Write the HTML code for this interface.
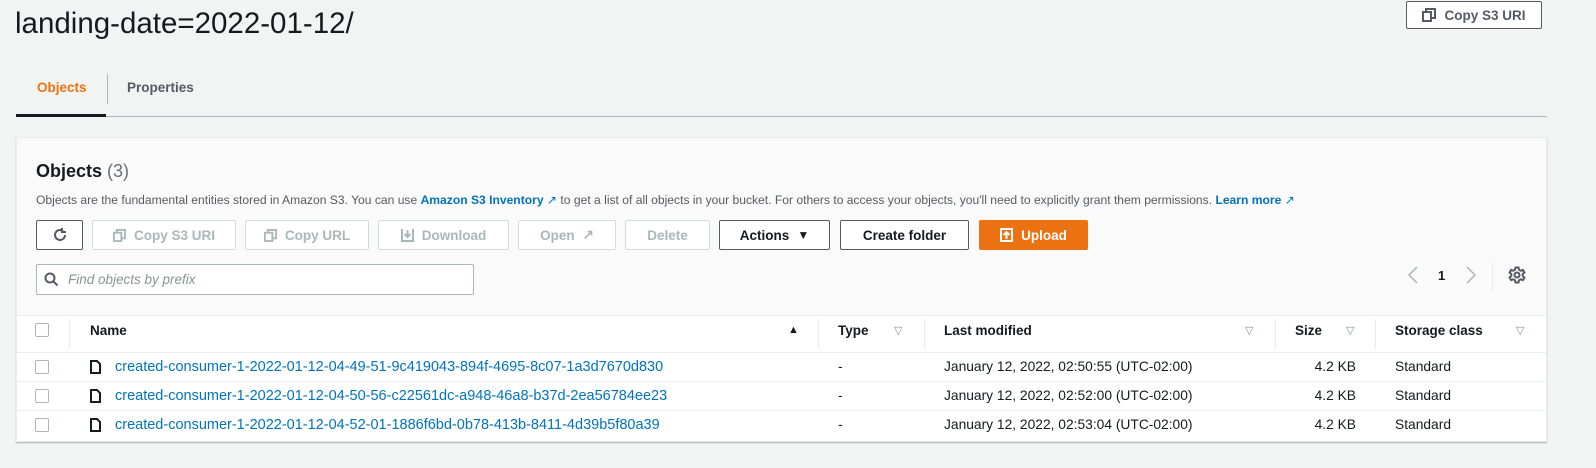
<!DOCTYPE html>
<html><head><meta charset="utf-8"><style>
*{box-sizing:border-box;margin:0;padding:0}
body{width:1596px;height:468px;background:#f2f3f3;font-family:"Liberation Sans",sans-serif;color:#16191f;position:relative;overflow:hidden}
.a{position:absolute;white-space:nowrap}
.btn{position:absolute;height:30px;border:1px solid #545b64;border-radius:2px;background:#fff;font-weight:bold;font-size:13.5px;color:#545b64;display:flex;align-items:center;justify-content:center;gap:8px}
.dis{border-color:#d5dbdb;color:#aab7b8}
.hd{font-weight:bold;font-size:13.5px;color:#16191f}
.div{position:absolute;width:1px;background:#eaeded}
.cb{position:absolute;width:14px;height:14px;border:1px solid #aab7b8;border-radius:2px;background:#fff}
.lnk{color:#0073bb;font-size:14.5px}
.cell{font-size:13.8px;color:#16191f}
.fil{position:absolute;color:#879596;font-size:11px}
</style></head><body>
<div class="a" style="left:15px;top:7px;font-size:29.5px;color:#16191f">landing-date=2022-01-12/</div>
<div class="btn" style="left:1406px;top:1px;width:136px;height:28px;color:#545b64"><svg width="14" height="14" viewBox="0 0 14 14" fill="none" stroke="#545b64" stroke-width="2"><rect x="1" y="4" width="8" height="9"/><path d="M4 4V1h9v9h-4"/></svg>Copy S3 URI</div>

<div class="a" style="left:37px;top:80px;font-size:13.5px;font-weight:bold;color:#ec7211">Objects</div>
<div class="a" style="left:107px;top:74px;width:1px;height:30px;background:#aab7b8"></div>
<div class="a" style="left:127px;top:80px;font-size:13.5px;font-weight:bold;color:#545b64">Properties</div>
<div class="a" style="left:16px;top:116px;width:1531px;height:1px;background:#aab7b8"></div>
<div class="a" style="left:16px;top:114px;width:90px;height:3px;background:#16191f"></div>

<div class="a" style="left:16px;top:137px;width:1531px;height:305px;background:#fafafa;border:1px solid #eaeded;box-shadow:0 1px 1px rgba(0,28,36,.3)"></div>
<div class="a" style="left:36px;top:161px;font-size:18px;font-weight:bold">Objects <span style="font-weight:normal;color:#687078">(3)</span></div>
<div class="a" style="left:36px;top:193px;font-size:12.1px;color:#545b64">Objects are the fundamental entities stored in Amazon S3. You can use <b style="color:#0073bb">Amazon S3 Inventory</b> <span style="color:#0073bb">&#x2197;&#xFE0E;</span> to get a list of all objects in your bucket. For others to access your objects, you'll need to explicitly grant them permissions. <b style="color:#0073bb">Learn more</b> <span style="color:#0073bb">&#x2197;&#xFE0E;</span></div>

<div class="btn" style="left:36px;top:220px;width:47px"><svg width="16" height="16" viewBox="0 0 16 16" fill="none" stroke="#545b64" stroke-width="2"><path d="M13 8a5 5 0 1 1-2-4"/><path d="M10 1v4h4" /></svg></div>
<div class="btn dis" style="left:92px;top:220px;width:144px"><svg width="13" height="13" viewBox="0 0 14 14" fill="none" stroke="#aab7b8" stroke-width="2"><rect x="1" y="4" width="8" height="9"/><path d="M4 4V1h9v9h-4"/></svg>Copy S3 URI</div>
<div class="btn dis" style="left:245px;top:220px;width:124px"><svg width="13" height="13" viewBox="0 0 14 14" fill="none" stroke="#aab7b8" stroke-width="2"><rect x="1" y="4" width="8" height="9"/><path d="M4 4V1h9v9h-4"/></svg>Copy URL</div>
<div class="btn dis" style="left:378px;top:220px;width:131px"><svg width="13" height="14" viewBox="0 0 13 14" fill="none" stroke="#aab7b8" stroke-width="2"><path d="M1 1v12h11V1M6.5 2v7M3.5 6l3 3 3-3"/></svg>Download</div>
<div class="btn dis" style="left:518px;top:220px;width:98px">Open <span>&#x2197;&#xFE0E;</span></div>
<div class="btn dis" style="left:625px;top:220px;width:85px">Delete</div>
<div class="btn" style="left:719px;top:220px;width:111px;color:#16191f">Actions <span style="font-size:12px">&#9660;</span></div>
<div class="btn" style="left:840px;top:220px;width:129px;color:#16191f">Create folder</div>
<div class="btn" style="left:979px;top:220px;width:109px;background:#ec7211;border-color:#ec7211;color:#fff"><svg width="13" height="14" viewBox="0 0 13 14" fill="none" stroke="#fff" stroke-width="2"><path d="M1 1h11v12H1zM6.5 11V4M3.5 7l3-3 3 3"/></svg>Upload</div>

<div class="a" style="left:36px;top:264px;width:438px;height:31px;background:#fff;border:1px solid #aab7b8;border-radius:2px"></div>
<svg class="a" style="left:44px;top:272px" width="15" height="15" viewBox="0 0 15 15" fill="none" stroke="#545b64" stroke-width="2"><circle cx="6" cy="6" r="4.5"/><path d="M9.5 9.5l4 4"/></svg>
<div class="a" style="left:68px;top:272px;font-size:13.5px;font-style:italic;color:#879596">Find objects by prefix</div>

<svg class="a" style="left:1407px;top:266px" width="12" height="18" viewBox="0 0 12 18" fill="none" stroke="#aab7b8" stroke-width="1.5"><path d="M10 1L2 9l8 8"/></svg>
<div class="a" style="left:1438px;top:268px;font-size:13px;font-weight:bold">1</div>
<svg class="a" style="left:1465px;top:266px" width="12" height="18" viewBox="0 0 12 18" fill="none" stroke="#aab7b8" stroke-width="1.5"><path d="M2 1l8 8-8 8"/></svg>
<div class="a" style="left:1492px;top:262px;width:1px;height:30px;background:#eaeded"></div>
<svg class="a" style="left:1508px;top:266px" width="18" height="18" viewBox="0 0 18 18" fill="none" stroke="#545b64" stroke-width="2"><circle cx="9" cy="9" r="2.5"/><path d="M7.5 1.5h3l.5 2.2 1.8 1 2.1-.8 1.5 2.6-1.7 1.5v2l1.7 1.5-1.5 2.6-2.1-.8-1.8 1-.5 2.2h-3l-.5-2.2-1.8-1-2.1.8-1.5-2.6L3.3 10V8L1.6 6.5l1.5-2.6 2.1.8 1.8-1z"/></svg>

<div class="a" style="left:17px;top:315px;width:1529px;height:126px;background:#fff;border-top:1px solid #eaeded"></div>
<div class="cb" style="left:35px;top:323px"></div>
<div class="div" style="left:69px;top:319px;height:30px"></div>
<div class="a hd" style="left:90px;top:323px">Name</div>
<div class="a" style="left:788px;top:324px;font-size:11px">&#9650;</div>
<div class="div" style="left:818px;top:319px;height:30px"></div>
<div class="a hd" style="left:838px;top:323px">Type</div>
<div class="fil" style="left:894px;top:324px">&#9661;</div>
<div class="div" style="left:924px;top:319px;height:30px"></div>
<div class="a hd" style="left:944px;top:323px">Last modified</div>
<div class="fil" style="left:1245px;top:324px">&#9661;</div>
<div class="div" style="left:1275px;top:319px;height:30px"></div>
<div class="a hd" style="left:1295px;top:323px">Size</div>
<div class="fil" style="left:1346px;top:324px">&#9661;</div>
<div class="div" style="left:1375px;top:319px;height:30px"></div>
<div class="a hd" style="left:1395px;top:323px">Storage class</div>
<div class="fil" style="left:1516px;top:324px">&#9661;</div>

<div class="a" style="left:17px;top:352px;width:1529px;height:1px;background:#eaeded"></div>
<div class="a" style="left:17px;top:381px;width:1529px;height:1px;background:#eaeded"></div>
<div class="a" style="left:17px;top:410px;width:1529px;height:1px;background:#eaeded"></div>

<div class="cb" style="left:35px;top:360px"></div>
<svg class="a" style="left:90px;top:360px" width="11" height="14" viewBox="0 0 11 14" fill="none" stroke="#16191f" stroke-width="2"><path d="M1 1h6l3 3v9H1z"/></svg>
<div class="a lnk" style="left:115px;top:359px">created-consumer-1-2022-01-12-04-49-51-9c419043-894f-4695-8c07-1a3d7670d830</div>
<div class="a cell" style="left:838px;top:359px">-</div>
<div class="a cell" style="left:944px;top:359px">January 12, 2022, 02:50:55 (UTC-02:00)</div>
<div class="a cell" style="left:1290px;top:359px;width:66px;text-align:right">4.2 KB</div>
<div class="a cell" style="left:1395px;top:359px">Standard</div>

<div class="cb" style="left:35px;top:389px"></div>
<svg class="a" style="left:90px;top:389px" width="11" height="14" viewBox="0 0 11 14" fill="none" stroke="#16191f" stroke-width="2"><path d="M1 1h6l3 3v9H1z"/></svg>
<div class="a lnk" style="left:115px;top:388px">created-consumer-1-2022-01-12-04-50-56-c22561dc-a948-46a8-b37d-2ea56784ee23</div>
<div class="a cell" style="left:838px;top:388px">-</div>
<div class="a cell" style="left:944px;top:388px">January 12, 2022, 02:52:00 (UTC-02:00)</div>
<div class="a cell" style="left:1290px;top:388px;width:66px;text-align:right">4.2 KB</div>
<div class="a cell" style="left:1395px;top:388px">Standard</div>

<div class="cb" style="left:35px;top:418px"></div>
<svg class="a" style="left:90px;top:418px" width="11" height="14" viewBox="0 0 11 14" fill="none" stroke="#16191f" stroke-width="2"><path d="M1 1h6l3 3v9H1z"/></svg>
<div class="a lnk" style="left:115px;top:417px">created-consumer-1-2022-01-12-04-52-01-1886f6bd-0b78-413b-8411-4d39b5f80a39</div>
<div class="a cell" style="left:838px;top:417px">-</div>
<div class="a cell" style="left:944px;top:417px">January 12, 2022, 02:53:04 (UTC-02:00)</div>
<div class="a cell" style="left:1290px;top:417px;width:66px;text-align:right">4.2 KB</div>
<div class="a cell" style="left:1395px;top:417px">Standard</div>
</body></html>
